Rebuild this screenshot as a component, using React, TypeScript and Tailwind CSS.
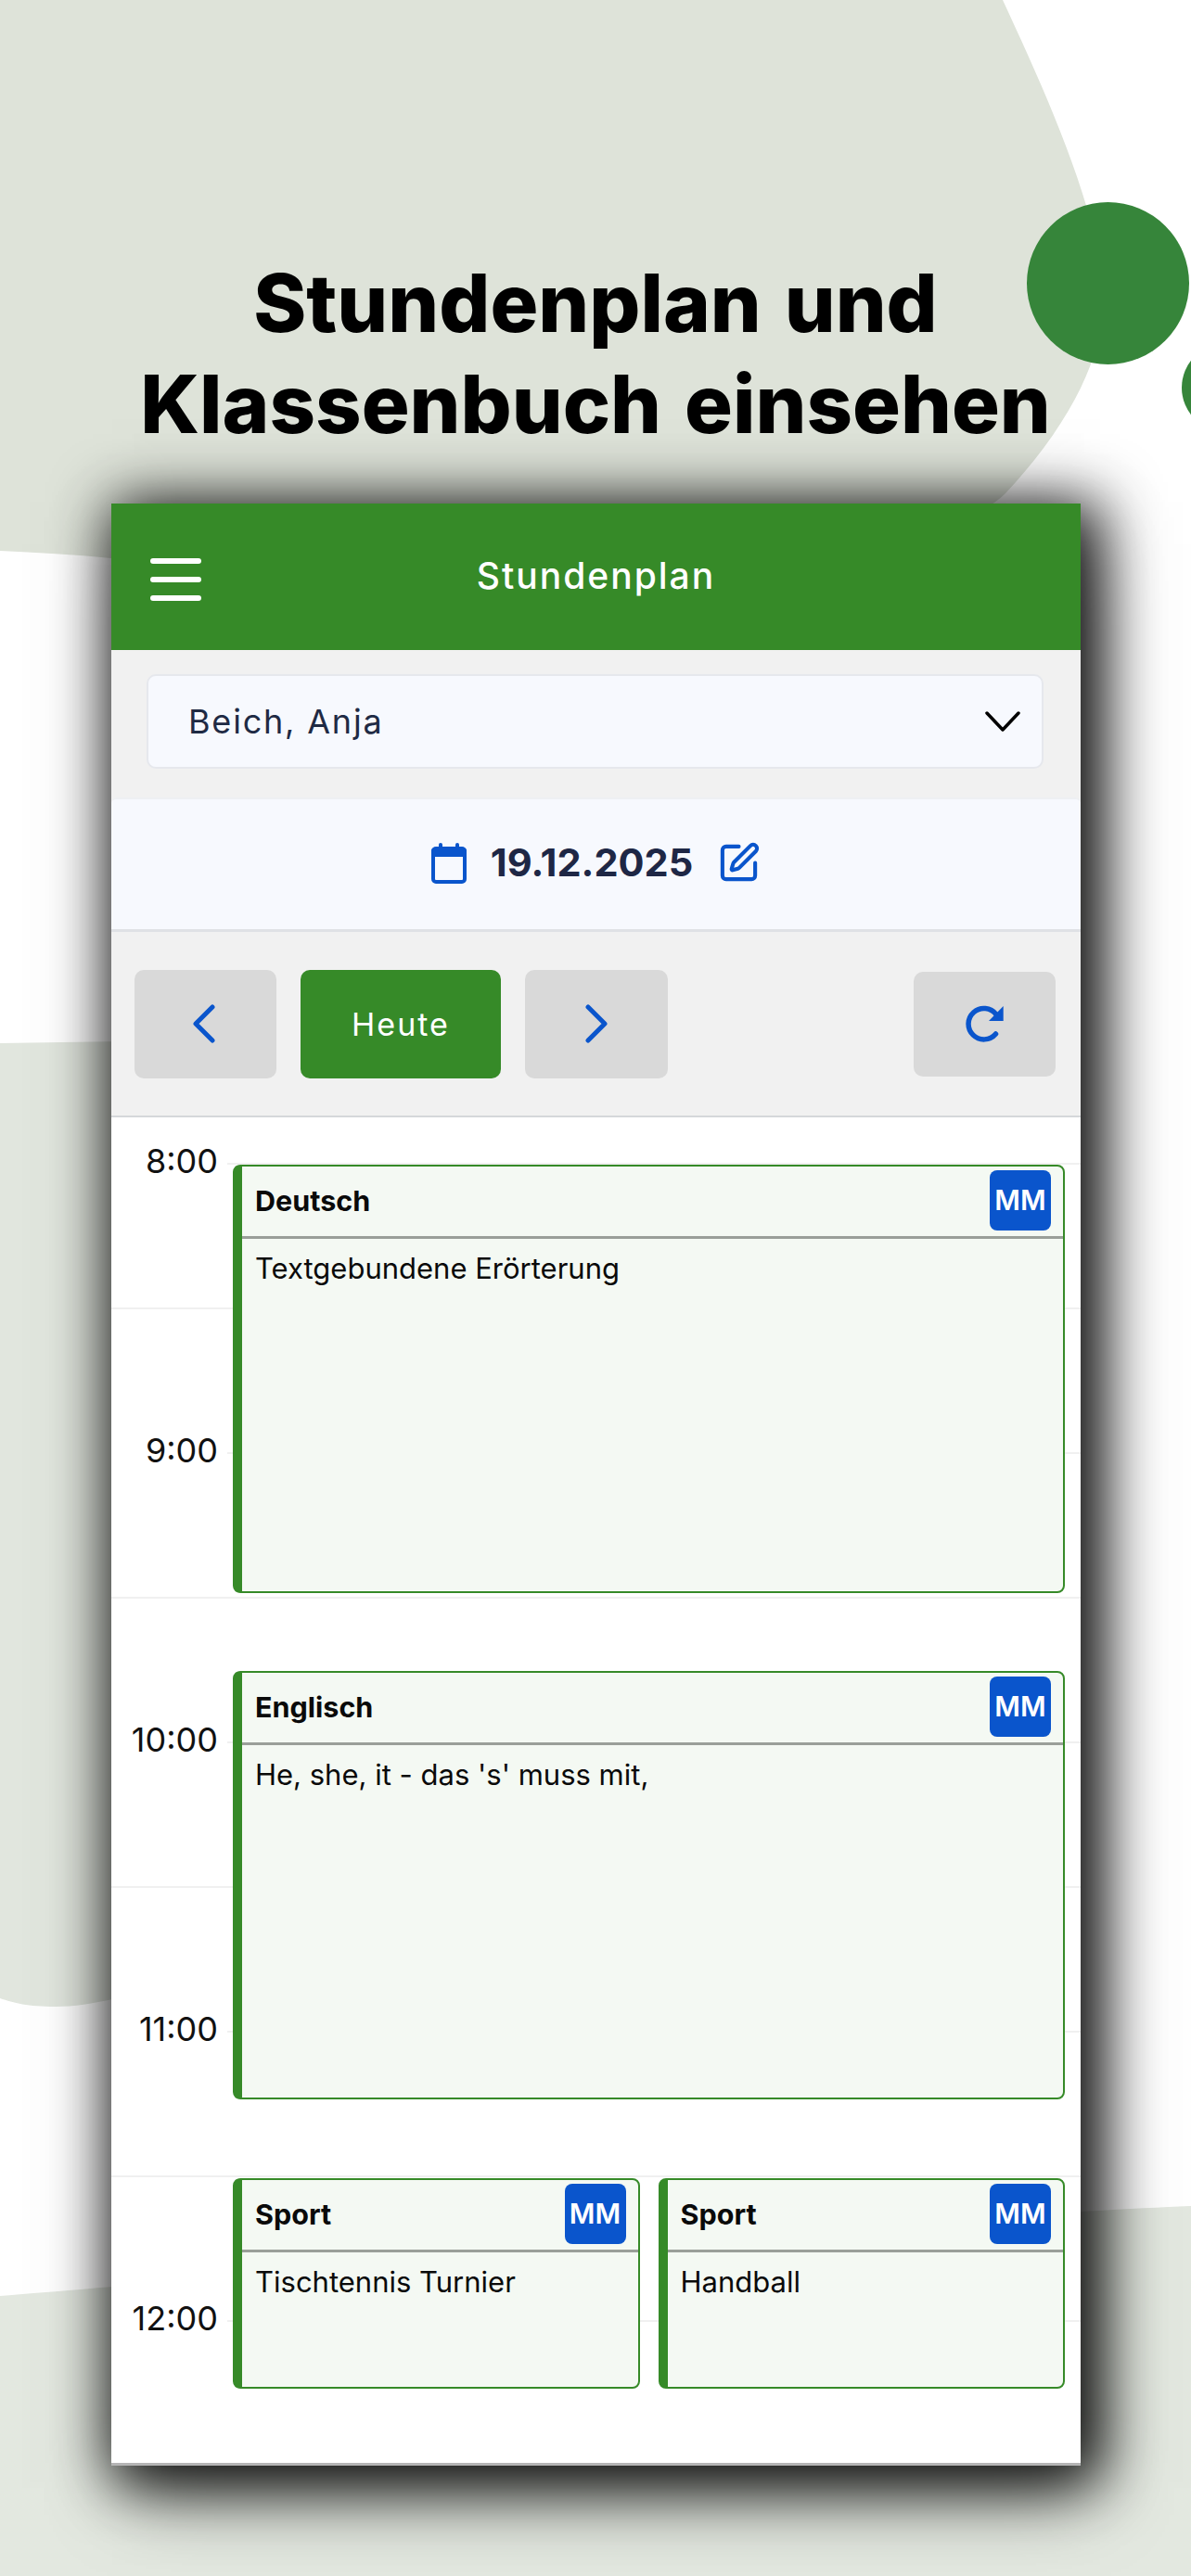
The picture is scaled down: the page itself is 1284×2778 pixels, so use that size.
import React from "react";
import { SquarePen } from "lucide-react";

const hours = ["8:00", "9:00", "10:00", "11:00", "12:00"];

const Backdrop = () => (
  <svg className="absolute left-0 top-0" width="1284" height="2778" viewBox="0 0 1284 2778">
    <path
      d="M0 0 L1081 0 C1125 95 1180 215 1190 310 C1193 370 1165 445 1084 532 C1000 620 400 640 120 602 C80 598 40 596 0 594 Z"
      fill="#dee3d9"
    />
    <path
      d="M0 1125 L200 1122 L200 2140 C140 2150 100 2164 60 2164 C30 2164 15 2160 0 2155 Z"
      fill="#e1e6de"
    />
    <path
      d="M0 2476 C200 2460 1000 2390 1284 2379 L1284 2778 L0 2778 Z"
      fill="#e3e8e0"
    />
    <circle cx="1194.5" cy="305.5" r="87.5" fill="#36853a" />
    <circle cx="1322" cy="418" r="48" fill="#36853a" />
  </svg>
);

const Badge = () => (
  <div className="flex h-[65px] w-[66px] shrink-0 items-center justify-center rounded-[8px] bg-[#0a55cc] text-[30px] font-semibold text-white">
    MM
  </div>
);

const LessonCard = ({
  subject,
  topic,
  className,
}: {
  subject: string;
  topic: string;
  className: string;
}) => (
  <div
    className={`flex flex-col overflow-hidden rounded-[8px] border-2 border-l-[10px] border-[#368a28] bg-[#f4f9f3] ${className}`}
  >
    <div className="flex h-[78px] shrink-0 items-center justify-between border-b-[3px] border-[#9a9f99] pb-[2px] pl-[14px] pr-[13px]">
      <span className="text-[30.5px] font-bold text-[#0a0a0a]">{subject}</span>
      <Badge />
    </div>
    <p className="pl-[14px] pt-[12px] text-[31px] leading-[40px] text-[#0a0a0a]">{topic}</p>
  </div>
);

const HourBlock = ({ label, index }: { label: string; index: number }) => (
  <div className="flex flex-col">
    <div className={`flex ${index === 0 ? "h-[51px]" : "h-[156px]"}`}>
      <span className="w-[115px] shrink-0 translate-y-[18px] self-end text-right text-[36px] leading-[44px] text-[#111111]">
        {label}
      </span>
      <div className="ml-[10px] grow border-b-2 border-[#f0f0f0]" />
    </div>
    <div
      className={
        index === hours.length - 1 ? "h-[152px]" : "h-[156px] border-b-2 border-[#f0f0f0]"
      }
    />
  </div>
);

const Timeline = () => (
  <div className="relative border-t-2 border-[#d5d7da] bg-white">
    {hours.map((label, index) => (
      <HourBlock key={label} label={label} index={index} />
    ))}
    <div className="absolute inset-0 flex flex-col pl-[131px] pr-[17px] pt-[51px]">
      <LessonCard subject="Deutsch" topic="Textgebundene Erörterung" className="h-[462px]" />
      <LessonCard subject="Englisch" topic="He, she, it - das 's' muss mit," className="mt-[84px] h-[462px]" />
      <div className="mt-[85px] flex gap-[20px]">
        <LessonCard subject="Sport" topic="Tischtennis Turnier" className="h-[227px] flex-1" />
        <LessonCard subject="Sport" topic="Handball" className="h-[227px] flex-1" />
      </div>
    </div>
  </div>
);

const Toolbar = () => (
  <div className="flex h-[198px] items-center justify-between bg-[#f1f1f1] pl-[25px] pr-[27px]">
    <div className="flex items-center gap-[26px]">
      <button className="flex h-[117px] w-[153px] items-center justify-center rounded-[10px] bg-[#d9d9d9]">
        <svg className="-ml-[3px]" width="24" height="42" viewBox="0 0 24 42" fill="none" stroke="#0a55cc" strokeWidth="5" strokeLinecap="round" strokeLinejoin="round">
          <path d="M21 3 L3 21 L21 39" />
        </svg>
      </button>
      <button className="flex h-[117px] w-[216px] items-center justify-center rounded-[10px] bg-[#368a28] text-[34px] tracking-[2px] text-white">
        Heute
      </button>
      <button className="flex h-[117px] w-[154px] items-center justify-center rounded-[10px] bg-[#d9d9d9]">
        <svg width="24" height="42" viewBox="0 0 24 42" fill="none" stroke="#0a55cc" strokeWidth="5" strokeLinecap="round" strokeLinejoin="round">
          <path d="M3 3 L21 21 L3 39" />
        </svg>
      </button>
    </div>
    <button className="flex h-[113px] w-[153px] items-center justify-center rounded-[10px] bg-[#d9d9d9]">
      <svg width="42" height="40" viewBox="0 0 42 40" fill="none">
        <path d="M32.5 31 A16.7 16.7 0 1 1 33 10" stroke="#0a55cc" strokeWidth="5.5" strokeLinecap="round" />
        <path d="M40.7 1 L40.7 17 L25 17 Z" fill="#0a55cc" />
      </svg>
    </button>
  </div>
);

export default function App() {
  return (
    <div className="relative h-[2778px] w-[1284px] overflow-hidden bg-white font-['Inter',sans-serif]">
      <Backdrop />
      <div className="relative">
        <h1 className="pt-[272px] text-center text-[86.5px] font-extrabold leading-[109px] text-black [word-spacing:6px]">
          Stundenplan und
          <br />
          Klassenbuch einsehen
        </h1>
        <div className="ml-[120px] mt-[53px] flex w-[1045px] flex-col border-b-[3px] border-[#b5b5b5] bg-[#f1f1f1] shadow-[11px_8px_60px_10px_rgba(0,0,0,0.9),14px_34px_80px_-10px_rgba(0,0,0,0.55)]">
          <header className="relative flex h-[158px] items-center justify-center bg-[#368a28]">
            <div className="absolute left-[42px] top-[59px] flex w-[55px] flex-col gap-[14px]">
              <span className="h-[6px] rounded-full bg-white" />
              <span className="h-[6px] rounded-full bg-white" />
              <span className="h-[6px] rounded-full bg-white" />
            </div>
            <span className="-mt-[2px] text-[39px] font-medium tracking-[2px] text-white">Stundenplan</span>
          </header>
          <div className="pb-[31px] pl-[38px] pr-[40px] pt-[26px]">
            <div className="flex h-[102px] items-center justify-between rounded-[10px] border-2 border-[#e6e8ed] bg-[#f7f9fe] pl-[43px] pr-[23px]">
              <span className="text-[36px] tracking-[1.8px] text-[#1f2a44]">Beich, Anja</span>
              <svg width="38" height="22" viewBox="0 0 38 22" fill="none" stroke="#000000" strokeWidth="3.5" strokeLinecap="round" strokeLinejoin="round">
                <path d="M2 2 L19 20 L36 2" />
              </svg>
            </div>
          </div>
          <div className="flex h-[145px] items-center justify-center gap-[26px] rounded-t-[6px] border-b-[3px] border-t-2 border-[#dfe1e5] border-t-[#eef0f3] bg-[#f7f9fe] pb-[3px]">
            <svg width="38" height="44" viewBox="0 0 38 44" fill="none">
              <rect x="8" y="0" width="4" height="8" rx="2" fill="#0a55cc" />
              <rect x="26" y="0" width="4" height="8" rx="2" fill="#0a55cc" />
              <path d="M0 9 a4 4 0 0 1 4 -4 h30 a4 4 0 0 1 4 4 v6 h-38 Z" fill="#0a55cc" />
              <rect x="2" y="6" width="34" height="36" rx="3" stroke="#0a55cc" strokeWidth="4" />
            </svg>
            <span className="text-[41.5px] font-bold text-[#1e2745]">19.12.2025</span>
            <SquarePen size={47} strokeWidth={2.1} color="#0a55cc" />
          </div>
          <Toolbar />
          <Timeline />
        </div>
      </div>
    </div>
  );
}
